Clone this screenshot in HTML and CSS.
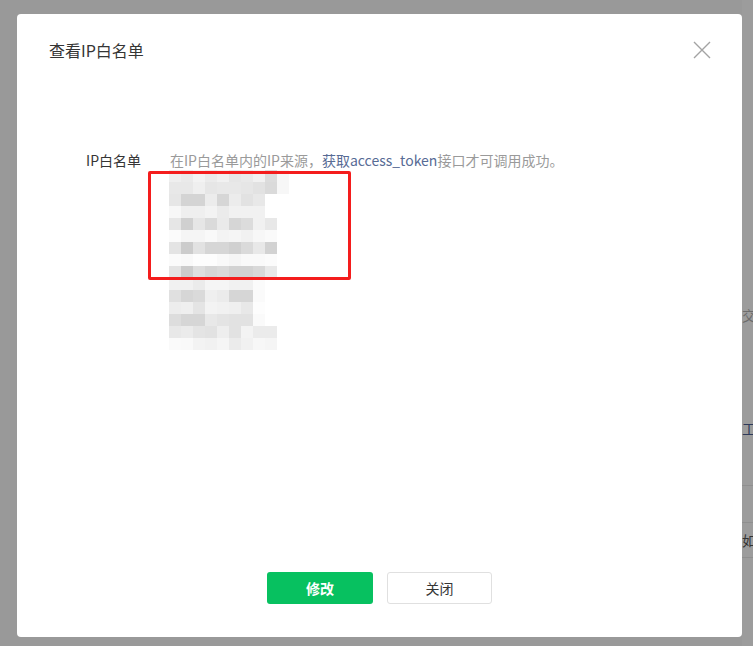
FILE: index.html
```html
<!DOCTYPE html>
<html lang="zh-CN">
    <head>
        <meta charset="UTF-8" />
        <meta name="viewport" content="width=device-width, initial-scale=1.0" />
        <title>查看IP白名单</title>
        <link rel="stylesheet" href="styles.css">
    </head>
    <body>
        <div class="page-edge">
            <span class="edge-text edge-gray">交</span>
            <span class="edge-text edge-blue">工</span>
            <span class="edge-line line-1"></span>
            <span class="edge-line line-2"></span>
            <span class="edge-text edge-dark">如</span>
            <span class="edge-line line-3"></span>
        </div>
        <div class="dialog">
            <div class="dialog-hd">
                <h3 class="dialog-title">查看IP白名单</h3>
                <button class="dialog-close" aria-label="关闭">
                    <svg width="18" height="18" viewBox="0 0 18 18">
                        <path d="M1 1L17 17M17 1L1 17" stroke="#a3a3a3" stroke-width="1.4" fill="none" />
                    </svg>
                </button>
            </div>
            <div class="dialog-bd">
                <div class="form-row">
                    <label class="form-label">IP白名单</label>
                    <div class="form-value">
                        <p class="tips">在IP白名单内的IP来源，<a href="#">获取access_token</a>接口才可调用成功。</p>
                        <div class="mosaic" id="mosaic">
                            <div class="mark"></div>
                        </div>
                    </div>
                </div>
            </div>
            <div class="dialog-ft">
                <button class="btn btn-primary">修改</button>
                <button class="btn btn-default">关闭</button>
            </div>
        </div>
        <script src="script.js"></script>
    </body>
</html>
```

FILE: styles.css
```css
* {
    margin: 0;
    padding: 0;
    box-sizing: border-box;
}
body {
    width: 753px;
    height: 646px;
    overflow: hidden;
    background-color: #999;
    font-family: "Noto Sans CJK SC", "Noto Sans", sans-serif;
    padding: 14px 0 0 17px;
    position: relative;
}
.page-edge {
    position: absolute;
    left: 742px;
    top: 0;
    width: 11px;
    height: 100%;
    background-color: #9c9c9c;
    overflow: hidden;
}
.edge-text {
    position: absolute;
    left: 0;
    font-size: 14px;
    line-height: 16px;
}
.edge-gray {
    top: 307px;
    color: #6c6c6c;
}
.edge-blue {
    top: 420px;
    color: #2e3a5a;
}
.edge-dark {
    top: 532px;
    color: #333;
}
.edge-line {
    position: absolute;
    left: 0;
    width: 100%;
    height: 1px;
    background-color: #8f8f8f;
}
.line-1 { top: 485px; }
.line-2 { top: 522px; }
.line-3 { top: 557px; }

.dialog {
    width: 725px;
    height: 623px;
    background-color: #fff;
    border-radius: 4px;
    display: flex;
    flex-direction: column;
}
.dialog-hd {
    display: flex;
    justify-content: space-between;
    align-items: center;
    padding: 24px 31px 0 32px;
}
.dialog-title {
    font-size: 16px;
    line-height: 24px;
    font-weight: normal;
    color: #353535;
}
.dialog-close {
    border: 0;
    background: none;
    width: 18px;
    height: 18px;
    display: flex;
}
.dialog-bd {
    flex: 1;
    padding: 88px 32px 0;
}
.form-row {
    display: flex;
    gap: 29px;
}
.form-label {
    width: 92px;
    text-align: right;
    font-size: 14px;
    line-height: 20px;
    color: #353535;
}
.tips {
    font-size: 14px;
    line-height: 20px;
    color: #9a9a9a;
}
.tips a {
    color: #576b95;
    text-decoration: none;
}
.mosaic {
    position: relative;
    margin-left: -1px;
    width: 180px;
}
.mosaic-row {
    display: flex;
    height: 12px;
}
.cell {
    width: 12px;
    height: 12px;
}
.mark {
    position: absolute;
    left: -21px;
    top: 1px;
    width: 203px;
    height: 109px;
    border: 3px solid #f41d1d;
    border-radius: 2px;
}
.dialog-ft {
    display: flex;
    justify-content: center;
    gap: 14px;
    padding-bottom: 33px;
}
.btn {
    width: 106px;
    height: 32px;
    border-radius: 3px;
    font-family: inherit;
    font-size: 14px;
}
.btn-primary {
    background-color: #07c160;
    border: 0;
    color: #fff;
    font-weight: bold;
}
.btn-default {
    width: 105px;
    background-color: #fff;
    border: 1px solid #e0e0e0;
    color: #353535;
}
```

FILE: script.js
```js
// 打码区域，每格灰度值
const rows = [
    [239, 234, 243, 235, 241, 230, 233, 241, 220, 247],
    [232, 232, 239, 230, 232, 232, 230, 226, 218, 247],
    [230, 212, 212, 236, 214, 236, 226, 232],
    [247, 239, 239, 243, 235, 241, 241, 241],
    [230, 208, 230, 218, 234, 214, 220, 241, 232],
    [251, 245, 245, 249, 243, 245, 241, 247, 250],
    [228, 204, 226, 214, 214, 208, 218, 232, 210],
    [251, 249, 253, 253, 249, 245, 249, 249, 251],
    [228, 204, 222, 214, 218, 210, 210, 216, 232],
    [241, 241, 235, 245, 245, 241, 241, 251],
    [224, 214, 218, 239, 235, 214, 214, 250],
    [237, 239, 228, 243, 241, 239, 232, 253],
    [221, 214, 214, 232, 228, 226, 226, 250],
    [232, 235, 228, 226, 238, 226, 243, 235, 235],
    [250, 249, 243, 241, 245, 235, 241, 247, 245]
]
const mosaic = document.querySelector('#mosaic')
const mark = mosaic.querySelector('.mark')

rows.forEach((row) => {
    const line = document.createElement('div')
    line.className = 'mosaic-row'
    row.forEach((v) => {
        const cell = document.createElement('span')
        cell.className = 'cell'
        cell.style.backgroundColor = `rgb(${v}, ${v}, ${v})`
        line.appendChild(cell)
    })
    mosaic.insertBefore(line, mark)
})
```
